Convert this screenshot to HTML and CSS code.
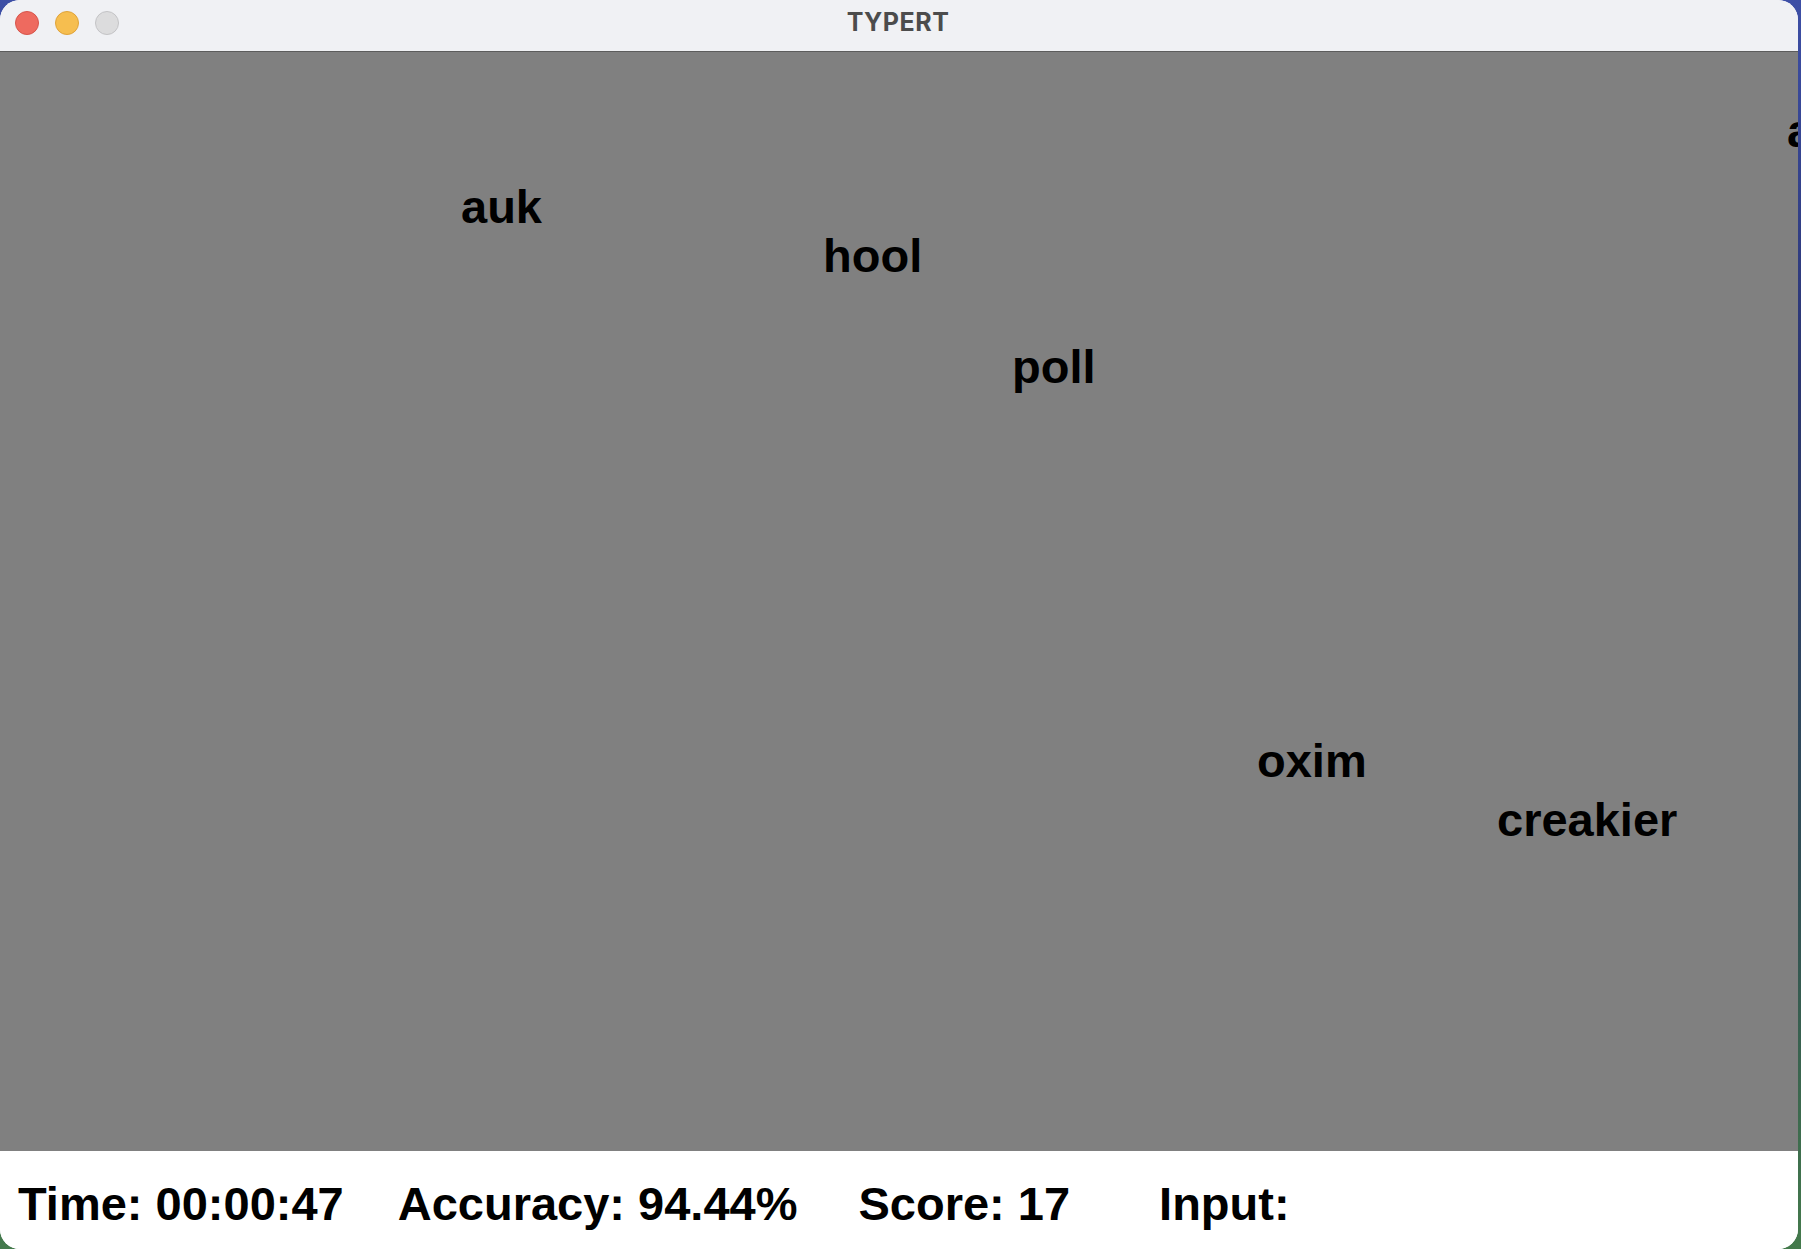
FILE: index.html
```html
<!DOCTYPE html>
<html lang="en">
<head>
    <meta charset="UTF-8">
    <meta name="viewport" content="width=device-width, initial-scale=1.0">
    <title>TYPERT</title>
    <link rel="stylesheet" href="styles.css">
</head>
<body>
    <div class="window">
        <div class="titlebar">
            <div class="lights">
                <span class="light close"></span>
                <span class="light minimize"></span>
                <span class="light zoom"></span>
            </div>
            <div class="title">TYPERT</div>
        </div>

        <div class="canvas" id="canvas">
            <span class="word" style="left: 1787px; top: 55px;">a</span>
            <span class="word" style="left: 461px; top: 131px;">auk</span>
            <span class="word" style="left: 823px; top: 180px;">hool</span>
            <span class="word" style="left: 1012px; top: 291px;">poll</span>
            <span class="word" style="left: 1257px; top: 685px;">oxim</span>
            <span class="word" style="left: 1497px; top: 744px;">creakier</span>
        </div>

        <div class="statusbar">
            <span class="stat time">Time: 00:00:47</span>
            <span class="stat accuracy">Accuracy: 94.44%</span>
            <span class="stat score">Score: 17</span>
            <span class="stat input">Input: <span id="typed"></span></span>
        </div>
    </div>
</body>
</html>
```

FILE: styles.css
```css
html, body {
    margin: 0;
    padding: 0;
    height: 100%;
}
body {
    background: linear-gradient(180deg, #3d4fa6 0%, #2a3470 30%, #2f4d52 70%, #447a4c 100%);
    overflow: hidden;
    font-family: "Liberation Sans", Arial, sans-serif;
}
.window {
    width: 1798px;
    height: 100%;
    display: flex;
    flex-direction: column;
    border-radius: 20px;
    overflow: hidden;
    background: #fff;
}
.titlebar {
    position: relative;
    height: 51px;
    flex: none;
    background: #f0f1f4;
    border-bottom: 1px solid #5c5c5c;
    display: flex;
    align-items: center;
    justify-content: center;
}
.lights {
    position: absolute;
    left: 15px;
    top: 11px;
    display: flex;
    gap: 16px;
}
.light {
    width: 22px;
    height: 22px;
    border-radius: 50%;
    border: 1px solid;
}
.close {
    background: #ee6a5f;
    border-color: #d6554b;
}
.minimize {
    background: #f6be4f;
    border-color: #dfa33a;
}
.zoom {
    background: #dcdcdd;
    border-color: #c3c3c5;
}
.title {
    font-family: Inter, "Open Sans", sans-serif;
    font-weight: 700;
    font-size: 25px;
    color: #4c4c4c;
    letter-spacing: 0.5px;
    margin-left: -2px;
    margin-bottom: 8px;
}
.canvas {
    position: relative;
    flex: 1;
    background: #808080;
    overflow: hidden;
}
.word {
    position: absolute;
    font-size: 47px;
    line-height: 47px;
    font-weight: bold;
    color: #000;
    white-space: nowrap;
}
.statusbar {
    height: 98px;
    flex: none;
    box-sizing: border-box;
    padding: 29px 0 0 18px;
    display: flex;
    background: #fff;
}
.stat {
    font-size: 47px;
    line-height: 47px;
    font-weight: bold;
    color: #000;
    white-space: nowrap;
}
.accuracy {
    margin-left: 54px;
}
.score {
    margin-left: 61px;
}
.input {
    margin-left: 89px;
}
```
